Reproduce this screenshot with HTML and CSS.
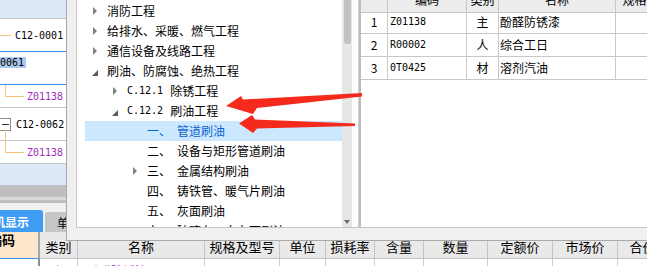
FILE: index.html
```html
<!DOCTYPE html>
<html lang="zh-CN">

<head>
    <meta charset="UTF-8">
    <meta name="viewport" content="width=device-width, initial-scale=1.0">
    <title>定额换算</title>
    <link rel="stylesheet" href="styles.css">
</head>

<body>
    <div class="page">
        <!-- 左侧定额树 -->
        <div class="gtree">
            <div class="grow blank"></div>
            <div class="grow tall blue-line"><span class="branch"></span><span class="code">C12-0001</span></div>
            <div class="grow tall blue-line top"><span class="code picked">0061</span></div>
            <div class="grow short"><span class="elbow"></span><span class="code sub">Z01138</span></div>
            <div class="grow tall"><span class="toggle"></span><span class="code">C12-0062</span></div>
            <div class="grow short"><span class="elbow long"></span><span class="code sub">Z01138</span></div>
            <div class="grow blank last"></div>
        </div>
        <div class="hscroll"></div>

        <!-- 底部页签 -->
        <div class="tabs">
            <span class="tab on">工料机显示</span>
            <span class="tab">单价构成</span>
        </div>

        <div class="btable">
            <div class="brow head">
                <span class="c c1 key">编码</span>
                <span class="c c2">类别</span>
                <span class="c c3">名称</span>
                <span class="c c4">规格及型号</span>
                <span class="c c5">单位</span>
                <span class="c c6">损耗率</span>
                <span class="c c7">含量</span>
                <span class="c c8">数量</span>
                <span class="c c9">定额价</span>
                <span class="c c10">市场价</span>
                <span class="c c11">合价</span>
                <span class="c c12"></span>
            </div>
            <div class="brow">
                <span class="c c1"></span>
                <span class="c c2 sub">主</span>
                <span class="c c3 sub left">酚醛防锈漆</span>
                <span class="c c4"></span>
                <span class="c c5"></span>
                <span class="c c6"></span>
                <span class="c c7"></span>
                <span class="c c8"></span>
                <span class="c c9"></span>
                <span class="c c10"></span>
                <span class="c c11"></span>
                <span class="c c12"></span>
            </div>
        </div>
    </div>

    <!-- 弹出窗口 -->
    <div class="dialog">
        <div class="picker">
            <div class="tree">
                <div class="node lv0"><span class="caret"></span>消防工程</div>
                <div class="node lv0"><span class="caret"></span>给排水、采暖、燃气工程</div>
                <div class="node lv0"><span class="caret"></span>通信设备及线路工程</div>
                <div class="node lv0"><span class="caret open"></span>刷油、防腐蚀、绝热工程</div>
                <div class="node lv1"><span class="caret"></span><span class="sn">C.12.1</span>除锈工程</div>
                <div class="node lv1"><span class="caret open"></span><span class="sn">C.12.2</span>刷油工程</div>
                <div class="node lv2 cur"><span class="caret none"></span><span class="no">一、</span>管道刷油</div>
                <div class="node lv2"><span class="caret none"></span><span class="no">二、</span>设备与矩形管道刷油</div>
                <div class="node lv2"><span class="caret"></span><span class="no">三、</span>金属结构刷油</div>
                <div class="node lv2"><span class="caret none"></span><span class="no">四、</span>铸铁管、暖气片刷油</div>
                <div class="node lv2"><span class="caret none"></span><span class="no">五、</span>灰面刷油</div>
                <div class="node lv2"><span class="caret none"></span><span class="no">六、</span>玻璃布、白布面刷油</div>
            </div>
            <div class="vbar">
                <span class="thumb"></span>
                <span class="down"></span>
            </div>
        </div>
        <div class="parts">
            <div class="pgrid">
                <span class="h"></span>
                <span class="h">编码</span>
                <span class="h">类别</span>
                <span class="h">名称</span>
                <span class="h">规格及型号</span>

                <span class="idx">1</span>
                <span class="pc">Z01138</span>
                <span class="kind">主</span>
                <span class="nm">酚醛防锈漆</span>
                <span></span>

                <span class="idx">2</span>
                <span class="pc">R00002</span>
                <span class="kind">人</span>
                <span class="nm">综合工日</span>
                <span></span>

                <span class="idx">3</span>
                <span class="pc">0T0425</span>
                <span class="kind">材</span>
                <span class="nm">溶剂汽油</span>
                <span></span>
            </div>
        </div>
    </div>

    <!-- 标注箭头 -->
    <svg class="marks" width="647" height="266" viewBox="0 0 647 266">
        <polygon points="226,106 241,96 243,99.5 362,93 362,96.5 257,108 253,114" fill="#f42a1c" />
        <polygon points="239,123.5 252,115 255,119.5 355,123.5 355,126 257,128.5 253,133" fill="#f42a1c" />
    </svg>
</body>

</html>
```

FILE: styles.css
```css
/*
    基本样式
*/
html,
body {
    margin: 0;
    padding: 0;
}

body {
    width: 647px;
    height: 266px;
    overflow: hidden;
    position: relative;
    background-color: #f0f0f0;
    font-family: "Noto Sans CJK SC", sans-serif;
    font-size: 12px;
    color: #000;
}

.code,
.sn,
.pc {
    font-family: "DejaVu Sans Mono", monospace;
    font-size: 10px;
}

.sub {
    color: #a22cc0;
}

/*
    左侧定额树
*/
.gtree {
    background-color: #fff;
}

.grow {
    display: flex;
    align-items: center;
    border-bottom: 1px solid #c8c8c8;
    white-space: nowrap;
}

.grow.blank {
    height: 18px;
    background-color: #dce7f8;
}

.grow.blank.last {
    height: 21px;
    border-bottom: none;
}

.grow.tall {
    height: 32px;
}

.grow.short {
    height: 22px;
}

.grow.blue-line {
    border-bottom-color: #3f8fe6;
}

.grow.top {
    align-items: flex-start;
}

.branch {
    width: 11px;
    height: 1px;
    margin-right: 4px;
    background-color: #f6c47f;
}

.picked {
    margin-top: 5px;
    line-height: 11px;
    padding-right: 2px;
    background-color: #a8c8ef;
}

.elbow {
    align-self: flex-start;
    box-sizing: border-box;
    width: 19px;
    height: 12px;
    margin-left: 5px;
    margin-right: 3px;
    border-left: 1px solid #f6c47f;
    border-bottom: 1px solid #f6c47f;
}

.elbow.long {
    height: 23px;
    margin-top: -11px;
}

.toggle {
    box-sizing: border-box;
    display: flex;
    align-items: center;
    justify-content: center;
    width: 12px;
    height: 13px;
    margin-left: -1px;
    margin-right: 5px;
    border: 1px solid #8c8c8c;
    background-color: #fff;
}

.toggle::after {
    content: "";
    width: 7px;
    height: 1px;
    background-color: #333;
}

.hscroll {
    height: 18px;
    background: linear-gradient(to bottom, #bfbfbf 0, #bfbfbf 12px, #dadada 12px, #dadada 15px, #bfbfbf 15px);
}

/*
    页签
*/
.tabs {
    display: flex;
    padding-top: 7px;
    height: 22px;
}

.tab {
    display: flex;
    align-items: center;
    height: 22px;
    overflow: hidden;
    white-space: nowrap;
}

.tab.on {
    width: 43px;
    box-sizing: border-box;
    justify-content: flex-end;
    padding-right: 14px;
    border-radius: 0 3px 0 0;
    background-color: #3e9cf5;
    color: #fff;
    font-weight: bold;
}

.tab:not(.on) {
    flex: 1;
    height: 20px;
    margin-top: 2px;
    margin-left: 2px;
    padding-left: 12px;
    border-radius: 3px 0 0 0;
    background-color: #c6c6c6;
}

/*
    工料机表格
*/
.brow {
    display: flex;
}

.brow .c {
    box-sizing: border-box;
    display: flex;
    justify-content: center;
    flex: none;
    height: 20px;
    padding-top: 4px;
    line-height: 16px;
    border-right: 1px solid #d0d0d0;
    background-color: #fff;
    white-space: nowrap;
    overflow: hidden;
}

.brow .c.left {
    justify-content: flex-start;
    padding-left: 9px;
}

.brow.head .c {
    height: 27px;
    align-items: flex-end;
    padding-top: 0;
    padding-bottom: 3px;
    font-size: 13px;
    border-right-color: #c4c4c4;
    border-bottom: 1px solid #c4c4c4;
    background-color: #e9e9e9;
}

.brow .c1 {
    width: 40px;
    border-right: 2px solid #8e8e8e;
}

.brow.head .c1.key {
    align-items: flex-start;
    justify-content: flex-end;
    padding-right: 23px;
    font-weight: bold;
    border-right-color: #a8a8a8;
    border-bottom-color: #3f8fe6;
    background-color: #fde8cd;
}

.brow .c2 { width: 38px; }
.brow .c3 { width: 127px; }
.brow .c4 { width: 75px; }
.brow .c5 { width: 46px; }
.brow .c6 { width: 49px; }
.brow .c7 { width: 49px; }
.brow .c8 { width: 64px; }
.brow .c9 { width: 65px; }
.brow .c10 { width: 65px; }
.brow .c11 { width: 50px; }
.brow .c12 { flex: 1; }

/*
    弹出窗口
*/
.dialog {
    position: absolute;
    top: 0;
    left: 66px;
    box-sizing: border-box;
    width: 581px;
    height: 241px;
    display: flex;
    padding: 0 0 12px 9px;
    border-left: 1px solid #a9a9a9;
    border-bottom: 1px solid #a9a9a9;
    background-color: #f0f0f0;
}

.picker {
    box-sizing: border-box;
    display: flex;
    width: 283px;
    padding-right: 6px;
    border-left: 1px solid #c6c6c6;
    border-right: 1px solid #cfcfcf;
    border-bottom: 1px solid #c6c6c6;
    background-color: #fff;
    overflow: hidden;
}

.tree {
    flex: 1;
    padding-top: 1px;
    overflow: hidden;
}

.node {
    display: flex;
    align-items: center;
    height: 20px;
    line-height: 20px;
    margin-left: 8px;
    white-space: nowrap;
}

.node.lv1 {
    padding-left: 20px;
}

.node.lv2 {
    padding-left: 40px;
}

.node.cur {
    background-color: #cce8ff;
    color: #0a64d2;
}

.caret {
    display: flex;
    align-items: center;
    flex: none;
    box-sizing: border-box;
    width: 22px;
    height: 20px;
    padding-left: 8px;
}

.caret::before {
    content: "";
    width: 0;
    height: 0;
    border-left: 4px solid #7f7f7f;
    border-top: 4px solid transparent;
    border-bottom: 4px solid transparent;
}

.caret.open {
    padding-left: 7px;
    padding-top: 3px;
}

.caret.open::before {
    border-top: none;
    border-left: 6px solid transparent;
    border-bottom: 6px solid #5a5a5a;
}

.caret.none::before {
    display: none;
}

.sn {
    margin-right: 7px;
}

.no {
    margin-right: 6px;
}

.vbar {
    display: flex;
    flex-direction: column;
    align-items: center;
    justify-content: space-between;
    width: 10px;
    background-color: #e6e6e6;
}

.thumb {
    width: 7px;
    height: 44px;
    border-radius: 0 0 3px 3px;
    background-color: #c2c2c2;
}

.down {
    width: 0;
    height: 0;
    margin-bottom: 3px;
    border-top: 4px solid #6e6e6e;
    border-left: 3.5px solid transparent;
    border-right: 3.5px solid transparent;
}

.parts {
    flex: 1;
    border-left: 2px solid #bdbdbd;
    border-bottom: 1px solid #c6c6c6;
    background-color: #fff;
    overflow: hidden;
}

.pgrid {
    display: grid;
    grid-template-columns: 27px 79px 32px 117px 74px;
    grid-auto-rows: 23px;
    margin-top: -12px;
}

.pgrid span {
    box-sizing: border-box;
    line-height: 22px;
    border-right: 1px solid #c8c8c8;
    border-bottom: 1px solid #c8c8c8;
    white-space: nowrap;
    overflow: hidden;
}

.pgrid .h {
    height: 25px;
    line-height: 24px;
    text-align: center;
    background-color: #ececec;
}

.pgrid .idx,
.pgrid .kind {
    text-align: center;
}

.pgrid .pc {
    padding-left: 2px;
}

.pgrid .nm {
    padding-left: 1px;
}

/*
    标注
*/
.marks {
    position: absolute;
    top: 0;
    left: 0;
    pointer-events: none;
}
```
